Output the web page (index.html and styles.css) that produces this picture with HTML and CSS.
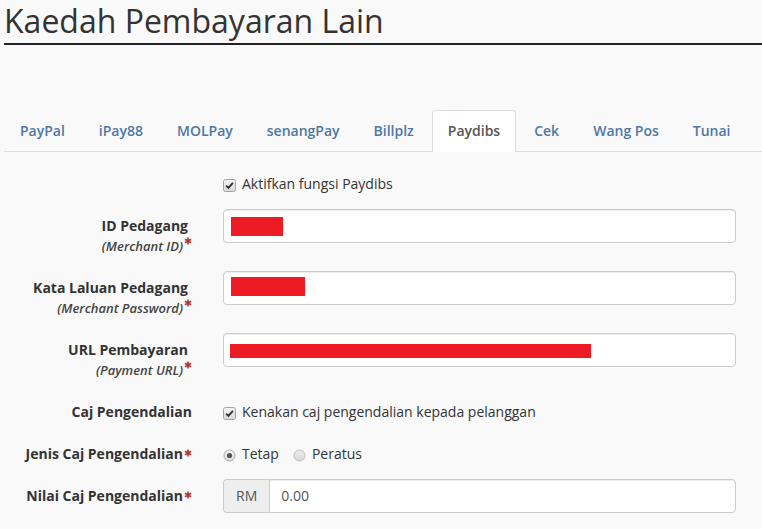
FILE: index.html
```html
<!DOCTYPE html>
<html lang="ms">
<head>
<meta charset="utf-8">
<title>Kaedah Pembayaran Lain</title>
<link rel="stylesheet" href="styles.css">
</head>
<body>
<div class="page">
  <h1 class="title">Kaedah Pembayaran Lain</h1>
  <ul class="tabs">
    <li><a>PayPal</a></li>
    <li><a>iPay88</a></li>
    <li><a>MOLPay</a></li>
    <li><a>senangPay</a></li>
    <li><a>Billplz</a></li>
    <li class="active"><a>Paydibs</a></li>
    <li><a>Cek</a></li>
    <li><a>Wang Pos</a></li>
    <li><a>Tunai</a></li>
  </ul>
  <form class="form">
    <div class="row">
      <div class="label"></div>
      <div class="control line">
        <svg class="cb" width="13" height="13" viewBox="0 0 13 13"><defs><linearGradient id="g1" x1="0" y1="0" x2="0" y2="1"><stop offset="0" stop-color="#f4f4f4"/><stop offset="1" stop-color="#d9d9d9"/></linearGradient></defs><rect x="0.5" y="0.5" width="12" height="12" rx="2" fill="url(#g1)" stroke="#a3a3a3"/><path d="M3.2 6.6 L5.4 8.9 L9.9 3.8" fill="none" stroke="#333" stroke-width="1.9"/></svg>
        <span>Aktifkan fungsi Paydibs</span>
      </div>
    </div>

    <div class="row">
      <label class="label">
        <span class="main pad">ID Pedagang</span>
        <span class="sub">(Merchant ID)<svg class="req req-sub" width="8" height="8" viewBox="0 0 8 8"><path d="M4 0.4V7.6M0.9 2.2L7.1 5.8M0.9 5.8L7.1 2.2" stroke="#b03a35" stroke-width="1.7"/></svg></span>
      </label>
      <div class="control"><div class="input"><span class="redact r1"></span></div></div>
    </div>

    <div class="row">
      <label class="label">
        <span class="main pad">Kata Laluan Pedagang</span>
        <span class="sub">(Merchant Password)<svg class="req req-sub" width="8" height="8" viewBox="0 0 8 8"><path d="M4 0.4V7.6M0.9 2.2L7.1 5.8M0.9 5.8L7.1 2.2" stroke="#b03a35" stroke-width="1.7"/></svg></span>
      </label>
      <div class="control"><div class="input"><span class="redact r2"></span></div></div>
    </div>

    <div class="row">
      <label class="label">
        <span class="main pad">URL Pembayaran</span>
        <span class="sub">(Payment URL)<svg class="req req-sub" width="8" height="8" viewBox="0 0 8 8"><path d="M4 0.4V7.6M0.9 2.2L7.1 5.8M0.9 5.8L7.1 2.2" stroke="#b03a35" stroke-width="1.7"/></svg></span>
      </label>
      <div class="control"><div class="input"><span class="redact r3"></span></div></div>
    </div>

    <div class="row">
      <label class="label"><span class="main">Caj Pengendalian</span></label>
      <div class="control line">
        <svg class="cb" width="13" height="13" viewBox="0 0 13 13"><defs><linearGradient id="g2" x1="0" y1="0" x2="0" y2="1"><stop offset="0" stop-color="#f4f4f4"/><stop offset="1" stop-color="#d9d9d9"/></linearGradient></defs><rect x="0.5" y="0.5" width="12" height="12" rx="2" fill="url(#g2)" stroke="#a3a3a3"/><path d="M3.2 6.6 L5.4 8.9 L9.9 3.8" fill="none" stroke="#333" stroke-width="1.9"/></svg>
        <span>Kenakan caj pengendalian kepada pelanggan</span>
      </div>
    </div>

    <div class="row">
      <label class="label"><span class="main">Jenis Caj Pengendalian<svg class="req req-main" width="8" height="8" viewBox="0 0 8 8"><path d="M4 0.4V7.6M0.9 2.2L7.1 5.8M0.9 5.8L7.1 2.2" stroke="#b03a35" stroke-width="1.7"/></svg></span></label>
      <div class="control line">
        <span class="opt">
          <svg class="cb" width="13" height="13" viewBox="0 0 13 13"><defs><linearGradient id="g3" x1="0" y1="0" x2="0" y2="1"><stop offset="0" stop-color="#f6f6f6"/><stop offset="1" stop-color="#dcdcdc"/></linearGradient></defs><circle cx="6.5" cy="6.5" r="5.5" fill="url(#g3)" stroke="#a8a8a8"/><circle cx="6.5" cy="6.5" r="2.6" fill="#555"/></svg>
          <span>Tetap</span>
        </span>
        <span class="opt opt-next">
          <svg class="cb" width="13" height="13" viewBox="0 0 13 13"><defs><linearGradient id="g4" x1="0" y1="0" x2="0" y2="1"><stop offset="0" stop-color="#eeeeee"/><stop offset="1" stop-color="#d6d6d6"/></linearGradient></defs><circle cx="6.5" cy="6.5" r="5.5" fill="url(#g4)" stroke="#bdbdbd"/></svg>
          <span>Peratus</span>
        </span>
      </div>
    </div>

    <div class="row">
      <label class="label"><span class="main">Nilai Caj Pengendalian<svg class="req req-main" width="8" height="8" viewBox="0 0 8 8"><path d="M4 0.4V7.6M0.9 2.2L7.1 5.8M0.9 5.8L7.1 2.2" stroke="#b03a35" stroke-width="1.7"/></svg></span></label>
      <div class="control">
        <div class="group">
          <span class="addon">RM</span>
          <span class="input group-input">0.00</span>
        </div>
      </div>
    </div>
  </form>
</div>
</body>
</html>
```

FILE: styles.css
```css
html, body {
  margin: 0;
  padding: 0;
  background: #f9f9f9;
}

body {
  font-family: "Open Sans", "Liberation Sans", sans-serif;
  font-size: 14px;
  color: #333;
  line-height: 20px;
}

.page {
  padding-left: 4px;
}

.title {
  margin: 0;
  padding: 3px 0 4px;
  font-size: 32px;
  font-weight: 400;
  line-height: 36px;
  color: #333;
  border-bottom: 2px solid #222;
}

.tabs {
  display: flex;
  list-style: none;
  margin: 65px 0 0;
  padding: 0;
  border-bottom: 1px solid #ddd;
}

.tabs li {
  margin: 0 2px -1px 0;
}

.tabs a {
  display: block;
  padding: 10px 15px;
  line-height: 20px;
  font-weight: 600;
  color: #4d78a5;
  border: 1px solid transparent;
  border-radius: 4px 4px 0 0;
}

.tabs .active a {
  color: #555;
  background: #fff;
  border-color: #ddd #ddd transparent;
}

.form {
  padding-top: 15px;
}

.row {
  display: grid;
  grid-template-columns: 188px 513px;
  column-gap: 31px;
  margin-bottom: 15px;
}

.label {
  display: block;
  text-align: right;
  font-weight: 700;
  padding-top: 7px;
  line-height: 20px;
  color: #333;
}

.main {
  display: block;
}

.main.pad {
  padding-right: 4px;
}

.sub {
  display: block;
  font-size: 13px;
  font-style: italic;
  font-weight: 600;
  color: #444;
}

.req {
  display: inline-block;
  vertical-align: top;
  margin-left: 1px;
}

.req-sub {
  margin-top: 1px;
}

.req-main {
  margin-top: 5px;
}

.line {
  display: flex;
  align-items: flex-start;
  padding-top: 7px;
  line-height: 20px;
}

.cb {
  flex: none;
  margin: 5px 6px 0 0;
}

.opt {
  display: flex;
  align-items: flex-start;
}

.opt-next {
  margin-left: 14px;
}

.input {
  display: flex;
  align-items: flex-start;
  box-sizing: border-box;
  height: 34px;
  background: #fff;
  border: 1px solid #ccc;
  border-radius: 4px;
  box-shadow: inset 0 1px 1px rgba(0, 0, 0, 0.075);
}

.redact {
  display: block;
  background: #ed1c24;
}

.r1 {
  width: 52px;
  height: 19px;
  margin: 7px 0 0 7px;
}

.r2 {
  width: 74px;
  height: 19px;
  margin: 5px 0 0 7px;
}

.r3 {
  width: 361px;
  height: 14px;
  margin: 10px 0 0 6px;
}

.group {
  display: flex;
}

.addon {
  box-sizing: border-box;
  height: 34px;
  padding: 6px 12px;
  background: #eee;
  border: 1px solid #ccc;
  border-right: 0;
  border-radius: 4px 0 0 4px;
  color: #555;
}

.group-input {
  flex: 1;
  padding: 6px 11px;
  border-radius: 0 4px 4px 0;
  color: #555;
}
```
